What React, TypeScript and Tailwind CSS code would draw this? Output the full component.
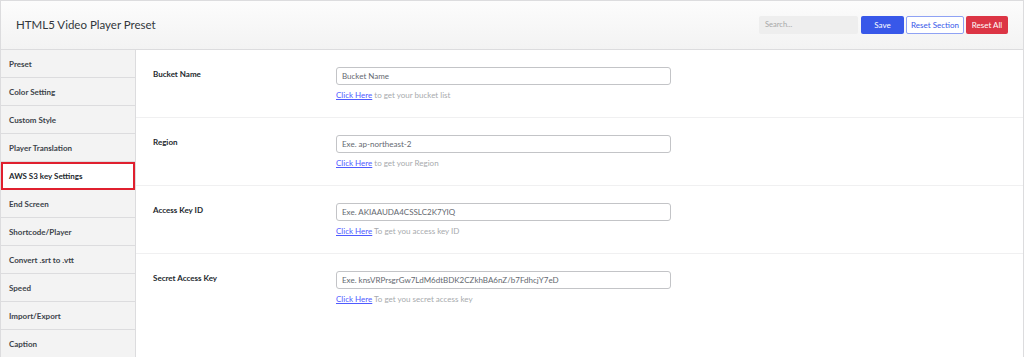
const menu = [
  "Preset",
  "Color Setting",
  "Custom Style",
  "Player Translation",
  "AWS S3 key Settings",
  "End Screen",
  "Shortcode/Player",
  "Convert .srt to .vtt",
  "Speed",
  "Import/Export",
  "Caption",
];

const fields = [
  { label: "Bucket Name", placeholder: "Bucket Name", hint: "to get your bucket list" },
  { label: "Region", placeholder: "Exe. ap-northeast-2", hint: "to get your Region" },
  { label: "Access Key ID", placeholder: "Exe. AKIAAUDA4CSSLC2K7YIQ", hint: "To get you access key ID" },
  {
    label: "Secret Access Key",
    placeholder: "Exe. knsVRPrsgrGw7LdM6dtBDK2CZkhBA6nZ/b7FdhcjY7eD",
    hint: "To get you secret access key",
  },
];

export default function App() {
  return (
    <div
      className="w-[1024px] h-[357px] overflow-hidden bg-white border-t border-l border-r border-[#dcdcde] flex flex-col"
      style={{ fontFamily: 'Lato, "Open Sans", sans-serif' }}
    >
      <header className="h-[49px] shrink-0 flex items-center justify-between pl-[15px] pr-[15px] bg-gradient-to-b from-[#fcfcfc] to-[#f3f3f3] border-b border-[#dcdcde]">
        <h1 className="text-[11.5px] text-[#32373c]">HTML5 Video Player Preset</h1>
        <div className="flex items-center gap-[2px]">
          <div className="w-[99px] h-[18px] bg-[#eeeeee] rounded-[2px] flex items-center px-[6px] text-[7.5px] text-[#a7a7a7] mr-[1px]">
            Search...
          </div>
          <button className="w-[43px] h-[18px] bg-[#3858e9] text-white text-[8px] rounded-[2px]">Save</button>
          <button className="w-[58px] h-[18px] bg-white border border-[#8fa2f4] text-[#3858e9] text-[8px] rounded-[2px]">
            Reset Section
          </button>
          <button className="w-[42px] h-[18px] bg-[#dc3545] text-white text-[8px] rounded-[2px]">Reset All</button>
        </div>
      </header>
      <div className="flex flex-1 min-h-0">
        <nav className="w-[135px] shrink-0 bg-[#f3f3f3] border-r border-[#dcdcde] flex flex-col">
          {menu.map((m) =>
            m === "AWS S3 key Settings" ? (
              <div
                key={m}
                className="h-[28px] shrink-0 bg-white border-2 border-[#e0202f] flex items-center pl-[6px] text-[8px] font-bold text-[#23282d]"
              >
                {m}
              </div>
            ) : (
              <div
                key={m}
                className="h-[28px] shrink-0 border-b border-[#dcdcde] flex items-center pl-[8px] text-[8px] font-bold text-[#3c434a]"
              >
                {m}
              </div>
            )
          )}
        </nav>
        <main className="flex-1 flex flex-col">
          {fields.map((f, i) => (
            <div
              key={f.label}
              className={`flex pt-[17px] pl-[17px] shrink-0 ${i < 3 ? "h-[68px] border-b border-[#f0f0f1]" : ""}`}
            >
              <div className="w-[183px] shrink-0 text-[8px] font-bold text-[#23282d] pt-[1px]">{f.label}</div>
              <div className="flex flex-col">
                <div className="w-[335px] h-[18px] border border-[#c3c4c7] rounded-[3px] flex items-center px-[5px] text-[8px] text-[#646970]">
                  {f.placeholder}
                </div>
                <div className="mt-[4px] text-[8px] text-[#a7aaad]">
                  <a className="text-[#4f5bff] underline">Click Here</a> {f.hint}
                </div>
              </div>
            </div>
          ))}
        </main>
      </div>
    </div>
  );
}
